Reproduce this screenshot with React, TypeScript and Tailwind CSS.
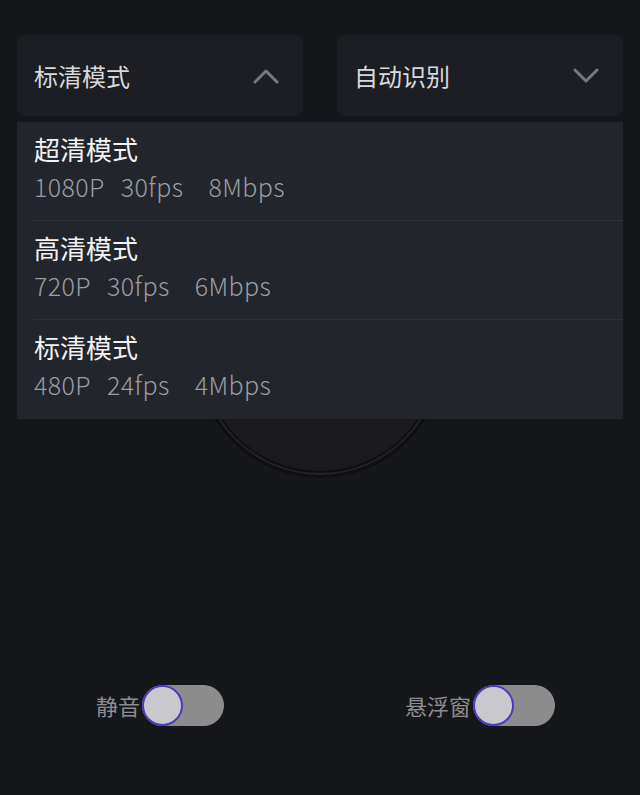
import React from "react";

type Mode = {
  title: string;
  spec: string[];
};

const modes: Mode[] = [
  { title: "超清模式", spec: ["1080P", "30fps", "8Mbps"] },
  { title: "高清模式", spec: ["720P", "30fps", "6Mbps"] },
  { title: "标清模式", spec: ["480P", "24fps", "4Mbps"] },
];

const font = { fontFamily: '"Noto Sans CJK SC", "Noto Sans", sans-serif' };

const Chevron = ({ up }: { up?: boolean }) => (
  <svg width="26" height="16" viewBox="0 0 26 16" fill="none">
    <path
      d={up ? "M2 14 L13 3 L24 14" : "M2 2 L13 13 L24 2"}
      stroke="#76787d"
      strokeWidth="3"
      strokeLinecap="round"
      strokeLinejoin="round"
    />
  </svg>
);

const Select = ({ label, open }: { label: string; open?: boolean }) => (
  <div className="flex-1 h-[81px] rounded-lg bg-[#1c1e23] pl-[17px] pr-[24px] flex items-center justify-between">
    <span className="text-[24px] text-[#d9d9db]">{label}</span>
    <Chevron up={open} />
  </div>
);

const Toggle = ({ label }: { label: string }) => (
  <div className="flex items-center">
    <span className="text-[22px] text-[#8e8e90] mr-[2px]">{label}</span>
    <div className="relative w-[82px] h-[41px] rounded-full bg-[#8c8c8c]">
      <div className="absolute left-0 top-0 w-[41px] h-[41px] rounded-full bg-[#c9c9cd] border-2 border-[#4a3bbd]" />
    </div>
  </div>
);

export default function App() {
  return (
    <div
      className="relative w-full h-[795px] overflow-hidden bg-[#16171b]"
      style={font}
    >
      <div className="flex gap-[34px] px-[17px] pt-[35px]">
        <Select label="标清模式" open />
        <Select label="自动识别" />
      </div>

      <div className="mx-auto mt-[114px] w-[248px] h-[248px] rounded-full bg-[#1b1a1f] border-[3px] border-[#0e0f12] shadow-[inset_0_0_0_2px_#222228,inset_0_0_0_4px_#0f1013]" />

      <div className="grid grid-cols-2 mt-[207px]">
        <div className="flex justify-center">
          <Toggle label="静音" />
        </div>
        <div className="flex justify-center">
          <Toggle label="悬浮窗" />
        </div>
      </div>

      <div className="absolute left-[17px] right-[17px] top-[122px] bg-[#22252c]">
        {modes.map((m, i) => (
          <div key={m.title} className="pl-[16px]">
            <div
              className={
                "h-[99px] pl-[1px] pt-[10px] " +
                (i < modes.length - 1 ? "border-b border-[#2e3139]" : "")
              }
            >
              <div className="text-[26px] leading-[34px] text-[#f2f2f4]">
                {m.title}
              </div>
              <div className="flex text-[25px] leading-[34px] font-light tracking-[0.4px] text-[#9b9da2] mt-[3px]">
                <span>{m.spec[0]}</span>
                <span className="ml-[16px]">{m.spec[1]}</span>
                <span className="ml-[25px]">{m.spec[2]}</span>
              </div>
            </div>
          </div>
        ))}
      </div>
    </div>
  );
}
